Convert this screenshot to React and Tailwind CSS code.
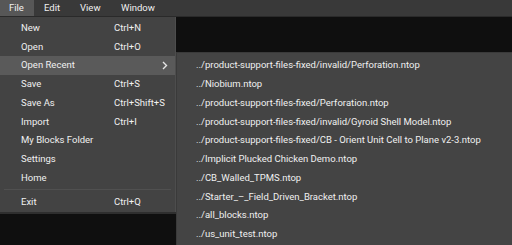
export default function App() {
  const items = [
    { label: "New", sc: "Ctrl+N" },
    { label: "Open", sc: "Ctrl+O" },
    { label: "Open Recent", sub: true },
    { label: "Save", sc: "Ctrl+S" },
    { label: "Save As", sc: "Ctrl+Shift+S" },
    { label: "Import", sc: "Ctrl+I" },
    { label: "My Blocks Folder" },
    { label: "Settings" },
    { label: "Home" },
  ];
  const recent = [
    "../product-support-files-fixed/invalid/Perforation.ntop",
    "../Niobium.ntop",
    "../product-support-files-fixed/Perforation.ntop",
    "../product-support-files-fixed/invalid/Gyroid Shell Model.ntop",
    "../product-support-files-fixed/CB - Orient Unit Cell to Plane v2-3.ntop",
    "../Implicit Plucked Chicken Demo.ntop",
    "../CB_Walled_TPMS.ntop",
    "../Starter_\u2013_Field_Driven_Bracket.ntop",
    "../all_blocks.ntop",
    "../us_unit_test.ntop",
  ];
  return (
    <div
      className="w-[512px] h-[245px] overflow-hidden bg-[#0f0f0f] text-[9.5px] text-[#f0f0f0] flex flex-col"
      style={{ fontFamily: "Roboto, 'Liberation Sans', sans-serif" }}
    >
      <div className="h-[16px] bg-[#393939] flex items-center shrink-0">
        <div className="h-full w-[34px] bg-[#575757] flex items-center pl-[9px]">File</div>
        <div className="ml-[10px] w-[36px]">Edit</div>
        <div className="w-[41px]">View</div>
        <div>Window</div>
      </div>
      <div className="h-px bg-[#2a2a2a] shrink-0" />
      <div className="flex flex-1 min-h-0">
        <div className="w-[176px] shrink-0 flex flex-col">
          <div className="bg-[#434343] border-r border-[#4d4d4d] pt-[1.5px] h-[195px] flex flex-col">
            {items.map((it) => (
              <div
                key={it.label}
                className={`h-[18.75px] shrink-0 flex items-center pl-[21px] pr-[6px] ${it.sub ? "bg-[#5a5a5a]" : ""}`}
              >
                <span className="w-[93px]">{it.label}</span>
                <span className="flex-1">{it.sc}</span>
                {it.sub && (
                  <svg width="6" height="9" viewBox="0 0 6 9" className="mr-[1px]">
                    <path d="M1 1 L4.5 4.5 L1 8" fill="none" stroke="#e6e6e6" strokeWidth="1.4" />
                  </svg>
                )}
              </div>
            ))}
            <div className="mx-[4px] mt-[2px] h-px bg-[#505050] shrink-0" />
            <div className="h-[18.75px] shrink-0 flex items-center pl-[21px] mt-[2.5px]">
              <span className="w-[93px]">Exit</span>
              <span>Ctrl+Q</span>
            </div>
          </div>
          <div className="h-[2px] bg-[#2e2e2e]" />
        </div>
        <div className="flex-1 flex flex-col">
          <div className="h-[35px] shrink-0" />
          <div className="h-px bg-[#3a3a3a]" />
          <div className="flex-1 bg-[#444444] border-l border-[#3a3a3a] pt-[3px] flex flex-col">
            {recent.map((r) => (
              <div key={r} className="h-[18.75px] shrink-0 flex items-center pl-[19px] whitespace-nowrap">
                {r}
              </div>
            ))}
          </div>
        </div>
      </div>
    </div>
  );
}
